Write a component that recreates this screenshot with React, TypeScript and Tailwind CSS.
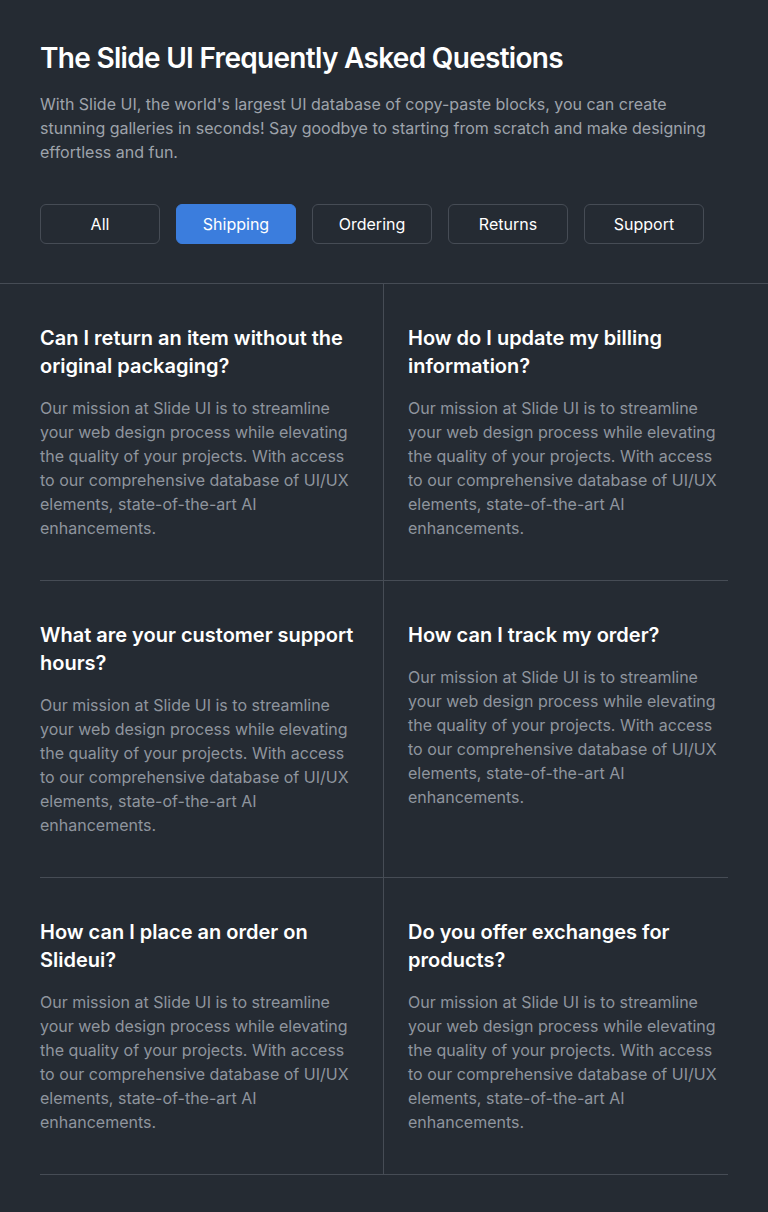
import React from "react";

const cats = ["All", "Shipping", "Ordering", "Returns", "Support"];
const qs = [
  "Can I return an item without the original packaging?",
  "How do I update my billing information?",
  "What are your customer support hours?",
  "How can I track my order?",
  "How can I place an order on Slideui?",
  "Do you offer exchanges for products?",
];
const body =
  "Our mission at Slide UI is to streamline your web design process while elevating the quality of your projects. With access to our comprehensive database of UI/UX elements, state-of-the-art AI enhancements.";

export default function App() {
  return (
    <div className="min-h-[1212px] bg-[#252b33] font-['Inter',sans-serif] antialiased">
      <div className="border-b border-[#464c55] px-10 pt-10 pb-[39px]">
        <h1 className="text-[28px] font-semibold leading-9 text-white tracking-tight">
          The Slide UI Frequently Asked Questions
        </h1>
        <p className="mt-4 text-base leading-6 text-[#9ea3ab]">
          With Slide UI, the world's largest UI database of copy-paste blocks, you can create stunning galleries in seconds! Say goodbye to starting from scratch and make designing effortless and fun.
        </p>
        <div className="mt-10 flex gap-4">
          {cats.map((c) => (
            <button
              key={c}
              className={
                c === "Shipping"
                  ? "h-10 w-[120px] rounded-md border border-[#3b7ddd] bg-[#3b7ddd] text-base text-white"
                  : "h-10 w-[120px] rounded-md border border-[#464c55] text-base text-white"
              }
            >
              {c}
            </button>
          ))}
        </div>
      </div>
      <div className="mx-10 grid grid-cols-2">
        {qs.map((q, i) => (
          <div
            key={q}
            className={
              i % 2 === 0
                ? "border-b border-r border-[#464c55] pr-6 pt-10 pb-10"
                : "border-b border-[#464c55] pl-6 pt-10 pb-10"
            }
          >
            <h3 className="text-xl font-semibold leading-7 text-white">{q}</h3>
            <p className="mt-4 text-base leading-6 text-[#8f959e]">{body}</p>
          </div>
        ))}
      </div>
    </div>
  );
}
